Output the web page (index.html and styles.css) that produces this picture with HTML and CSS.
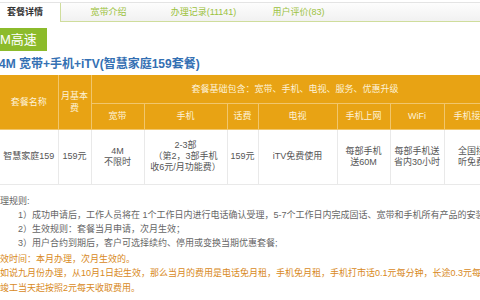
FILE: index.html
```html
<!DOCTYPE html>
<html lang="zh-CN">
<head>
    <meta charset="UTF-8">
    <meta name="viewport" content="width=device-width, initial-scale=1.0">
    <title>套餐详情</title>
    <link rel="stylesheet" href="styles.css">
</head>
<body>
    <div class="tabs">
        <div class="tab tab-active">套餐详情</div>
        <div class="tab">宽带介绍</div>
        <div class="tab">办理记录(11141)</div>
        <div class="tab">用户评价(83)</div>
    </div>

    <div class="detail">
        <div class="speed-badge">M高速</div>
        <h1 class="plan-title">4M 宽带+手机+iTV(智慧家庭159套餐)</h1>

        <table class="plan-table">
            <colgroup>
                <col style="width: 58px">
                <col style="width: 33px">
                <col style="width: 53px">
                <col style="width: 83px">
                <col style="width: 31px">
                <col style="width: 79px">
                <col style="width: 53px">
                <col style="width: 54px">
                <col style="width: 55px">
            </colgroup>
            <tr class="head-row-top">
                <th rowspan="2">套餐名称</th>
                <th rowspan="2">月基本费</th>
                <th colspan="7">套餐基础包含：宽带、手机、电视、服务、优惠升级</th>
            </tr>
            <tr class="head-row-sub">
                <th>宽带</th>
                <th>手机</th>
                <th>话费</th>
                <th>电视</th>
                <th>手机上网</th>
                <th>WiFi</th>
                <th>手机接听</th>
            </tr>
            <tr class="data-row">
                <td>智慧家庭159</td>
                <td>159元</td>
                <td>4M<br>不限时</td>
                <td>2-3部<br>（第2，3部手机<br>收6元/月功能费）</td>
                <td>159元</td>
                <td>iTV免费使用</td>
                <td>每部手机<br>送60M</td>
                <td>每部手机送<br>省内30小时</td>
                <td>全国接<br>听免费</td>
            </tr>
        </table>

        <div class="rules">
            <p class="rules-head">理规则:</p>
            <p class="rule">1）成功申请后，工作人员将在 1个工作日内进行电话确认受理，5-7个工作日内完成固话、宽带和手机所有产品的安装及配送；</p>
            <p class="rule">2）生效规则：套餐当月申请，次月生效；</p>
            <p class="rule">3）用户合约到期后，客户可选择续约、停用或变换当期优惠套餐;</p>
        </div>

        <div class="notice">
            <p>效时间：本月办理，次月生效的。</p>
            <p>如说九月份办理，从10月1日起生效，那么当月的费用是电话免月租，手机免月租，手机打市话0.1元每分钟，长途0.3元每分钟，</p>
            <p>竣工当天起按照2元每天收取费用。</p>
        </div>
    </div>
</body>
</html>
```

FILE: styles.css
```css
html, body {
    margin: 0;
    padding: 0;
    overflow: hidden;
}

body {
    font-family: "Liberation Sans", "Noto Sans CJK SC", sans-serif;
    background-color: #fff;
    color: #666;
    font-size: 9px;
}

.tabs {
    display: flex;
    height: 18px;
    margin-top: 2px;
    border-top: 1px solid #e4e4e4;
    border-bottom: 1px solid #cfdd9c;
    background: linear-gradient(#fdfdfd, #f1f1f1);
}

.tab {
    width: 95px;
    line-height: 18px;
    text-align: center;
    color: #9cc23e;
}

.tab-active {
    width: 53px;
    padding-left: 7px;
    text-align: left;
    color: #333;
    font-weight: bold;
    background-color: #fff;
    border-right: 1px solid #cfdd9c;
    height: 19px;
    margin-bottom: -1px;
}

.detail {
    padding-top: 6px;
}

.speed-badge {
    display: inline-block;
    height: 23px;
    line-height: 23px;
    padding-right: 10px;
    background-color: #8cbb2b;
    color: #fff;
    font-size: 13px;
}

.plan-title {
    margin: 5px 0 3px -1px;
    font-size: 12px;
    line-height: 16px;
    color: #3470b3;
}

.plan-table {
    border-collapse: collapse;
    table-layout: fixed;
    width: 499px;
    text-align: center;
}

.plan-table th {
    background-color: #e8a314;
    color: #fdf2d8;
    font-weight: normal;
    border: 1px solid #f1c66c;
    border-top: none;
    padding: 0 2px;
    line-height: 12px;
}

.plan-table th:first-child {
    border-left: none;
}

.head-row-top {
    height: 28px;
}

.head-row-sub {
    height: 26px;
}

.data-row {
    height: 55px;
}

.plan-table td {
    border: 1px solid #e9e9e9;
    border-top: none;
    color: #555;
    line-height: 11px;
    padding: 0;
}

.plan-table td:first-child {
    border-left: none;
}

.rules {
    margin-top: 9px;
}

.rules p,
.notice p {
    margin: 0;
    line-height: 14px;
    white-space: nowrap;
}

.rule {
    padding-left: 18px;
}

.notice {
    margin-top: 2px;
    color: #d8891c;
}

.notice p {
    line-height: 14.5px;
}
```
